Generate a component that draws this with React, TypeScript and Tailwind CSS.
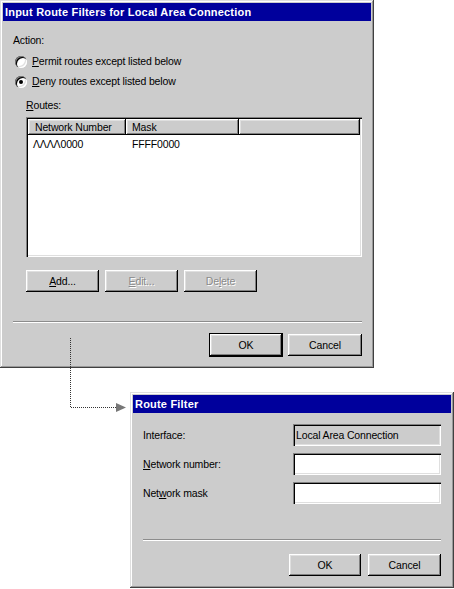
import React from "react";

const raised =
  "shadow-[inset_-1px_-1px_#000,inset_1px_1px_#fff,inset_-2px_-2px_#808080,inset_2px_2px_#dfdfdf]";
const sunken =
  "shadow-[inset_1px_1px_#808080,inset_2px_2px_#000,inset_-1px_-1px_#fff,inset_-2px_-2px_#dfdfdf]";
const windowFrame =
  "shadow-[inset_-1px_-1px_#404040,inset_1px_1px_#dfdfdf,inset_-2px_-2px_#999,inset_2px_2px_#fff]";

function Btn({
  children,
  def = false,
  disabled = false,
  className = "",
}: {
  children: React.ReactNode;
  def?: boolean;
  disabled?: boolean;
  className?: string;
}) {
  return (
    <div
      className={`flex h-[22px] items-center justify-center bg-[#cccccc] ${raised} ${
        def ? "outline outline-1 outline-black" : ""
      } ${
        disabled
          ? "text-[#8a8a8a] [text-shadow:1px_1px_0_#fff]"
          : "text-black"
      } ${className}`}
    >
      {children}
    </div>
  );
}

function Radio({ checked }: { checked?: boolean }) {
  return (
    <div className="relative h-3 w-3 rounded-full bg-white shadow-[inset_1px_1px_#808080,inset_2px_2px_#000,inset_-1px_-1px_#fff,inset_-2px_-2px_#dfdfdf]">
      {checked && (
        <div className="absolute left-1 top-1 h-1 w-1 rounded-full bg-black" />
      )}
    </div>
  );
}

function TitleBar({ title }: { title: string }) {
  return (
    <div className="flex h-[18px] items-center bg-[#00009c] pl-[2px] text-[11px] font-bold tracking-[0.2px] text-white">
      {title}
    </div>
  );
}

function Separator() {
  return <div className="h-[2px] border-t border-[#8c8c8c] border-b border-b-white" />;
}

export default function App() {
  return (
    <div
      className="relative h-[589px] w-[454px] overflow-hidden bg-white text-[10.5px] leading-[13px] tracking-[-0.15px] text-black"
      style={{ fontFamily: '"Liberation Sans", Arial, sans-serif' }}
    >
      {/* main dialog */}
      <div className={`absolute left-0 top-0 h-[368px] w-[374px] bg-[#cccccc] p-[3px] ${windowFrame}`}>
        <TitleBar title="Input Route Filters for Local Area Connection" />
        <div className="flex flex-col pl-[10px] pr-[9px]">
          <div className="mt-[13px]">Action:</div>
          <div className="mt-[8px] ml-[2px] flex items-center gap-[5px]">
            <Radio />
            <span>
              <u>P</u>ermit routes except listed below
            </span>
          </div>
          <div className="mt-[7px] ml-[2px] flex items-center gap-[5px]">
            <Radio checked />
            <span>
              <u>D</u>eny routes except listed below
            </span>
          </div>
          <div className="mt-[11px] ml-[13px]">
            <u>R</u>outes:
          </div>
          <div className={`ml-[13px] mt-[5px] h-[140px] bg-white p-[2px] ${sunken}`}>
            <div className="flex h-[16px]">
              <div className={`flex w-[98px] items-center bg-[#cccccc] pl-[7px] ${raised}`}>
                Network Number
              </div>
              <div className={`flex w-[113px] items-center bg-[#cccccc] pl-[6px] ${raised}`}>
                Mask
              </div>
              <div className={`flex-1 bg-[#cccccc] ${raised}`} />
            </div>
            <div className="mt-[3px] flex">
              <div className="w-[98px] pl-[5px]">ΛΛΛΛ0000</div>
              <div className="pl-[6px]">FFFF0000</div>
            </div>
          </div>
          <div className="ml-[13px] mt-[13px] flex gap-[6px]">
            <Btn className="w-[73px]">
              <span>
                <u>A</u>dd...
              </span>
            </Btn>
            <Btn disabled className="w-[73px]">
              <span>
                <u>E</u>dit...
              </span>
            </Btn>
            <Btn disabled className="w-[73px]">
              <span>
                De<u>l</u>ete
              </span>
            </Btn>
          </div>
          <div className="mt-[29px]">
            <Separator />
          </div>
          <div className="mt-[11px] flex justify-end gap-[6px]">
            <Btn def className="w-[72px]">
              OK
            </Btn>
            <Btn className="w-[74px]">Cancel</Btn>
          </div>
        </div>
      </div>

      {/* dotted connector */}
      <svg
        className="absolute left-0 top-0"
        width="454"
        height="589"
        viewBox="0 0 454 589"
      >
        <path
          d="M70.5 338 V407.5 H116"
          fill="none"
          stroke="#333"
          strokeWidth="1"
          strokeDasharray="1 1"
        />
        <path d="M116 403 L126 407.5 L116 412 Z" fill="#777" />
      </svg>

      {/* route filter dialog */}
      <div className={`absolute left-[130px] top-[392px] h-[196px] w-[324px] bg-[#cccccc] p-[3px] ${windowFrame}`}>
        <TitleBar title="Route Filter" />
        <div className="flex flex-col pl-[10px] pr-[10px]">
          <div className="mt-[11px] flex items-center justify-between">
            <span>Interface:</span>
            <div className={`flex h-[22px] w-[148px] items-center bg-[#cccccc] pl-[3px] ${sunken}`}>
              Local Area Connection
            </div>
          </div>
          <div className="mt-[7px] flex items-center justify-between">
            <span>
              <u>N</u>etwork number:
            </span>
            <div className={`h-[22px] w-[148px] bg-white ${sunken}`} />
          </div>
          <div className="mt-[7px] flex items-center justify-between">
            <span>
              Net<u>w</u>ork mask
            </span>
            <div className={`h-[22px] w-[148px] bg-white ${sunken}`} />
          </div>
          <div className="mt-[35px]">
            <Separator />
          </div>
          <div className="mt-[13px] flex justify-end gap-[7px]">
            <Btn className="w-[72px]">OK</Btn>
            <Btn className="w-[73px]">Cancel</Btn>
          </div>
        </div>
      </div>
    </div>
  );
}
